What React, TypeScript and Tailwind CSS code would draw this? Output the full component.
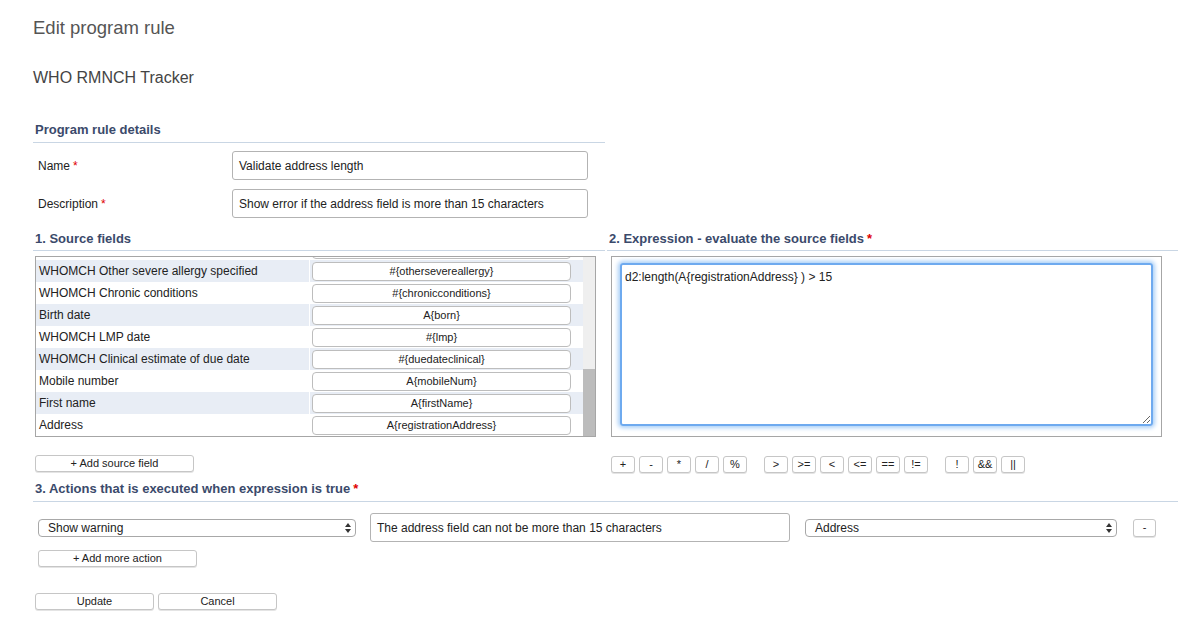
import React from "react";

type SourceRow = { label: string; value: string };

// First entry sits above the scrolled viewport; only its lower edge shows.
const sourceRows: SourceRow[] = [
  { label: "", value: "" },
  { label: "WHOMCH Other severe allergy specified", value: "#{othersevereallergy}" },
  { label: "WHOMCH Chronic conditions", value: "#{chronicconditions}" },
  { label: "Birth date", value: "A{born}" },
  { label: "WHOMCH LMP date", value: "#{lmp}" },
  { label: "WHOMCH Clinical estimate of due date", value: "#{duedateclinical}" },
  { label: "Mobile number", value: "A{mobileNum}" },
  { label: "First name", value: "A{firstName}" },
  { label: "Address", value: "A{registrationAddress}" },
];

const operatorGroups: string[][] = [
  ["+", "-", "*", "/", "%"],
  [">", ">=", "<", "<=", "==", "!="],
  ["!", "&&", "||"],
];

function Required() {
  return <span className="text-[#e00000] ml-[3px]">*</span>;
}

function SectionHeading({
  children,
  className = "",
  pb = "pb-[4px]",
}: {
  children: React.ReactNode;
  className?: string;
  pb?: string;
}) {
  return (
    <div
      className={`pl-[2px] ${pb} border-b border-[#c9d6e4] text-[13px] leading-[16px] font-bold text-[#3b4a6b] ${className}`}
    >
      {children}
    </div>
  );
}

function SmallButton({ children, className = "" }: { children: React.ReactNode; className?: string }) {
  return (
    <button
      type="button"
      className={`h-[17px] flex items-center justify-center bg-white border border-[#c6c6c6] rounded-[3px] shadow-[0_1px_0_#e4e4e4] text-[11px] leading-none text-[#222] ${className}`}
    >
      {children}
    </button>
  );
}

function SelectArrows() {
  return (
    <svg width="6" height="10" viewBox="0 0 6 10" className="shrink-0">
      <path d="M0 4 L3 0 L6 4 Z" fill="#333" />
      <path d="M0 6 L3 10 L6 6 Z" fill="#333" />
    </svg>
  );
}

function FakeSelect({ value, className = "" }: { value: string; className?: string }) {
  return (
    <div
      className={`h-[18px] flex items-center justify-between pl-[9px] pr-[4px] bg-white border border-[#a8a8a8] rounded-[4px] text-[12px] text-[#222] ${className}`}
    >
      <span>{value}</span>
      <SelectArrows />
    </div>
  );
}

export default function App() {
  return (
    <div className="w-[1190px] h-[629px] bg-white overflow-hidden font-['Liberation_Sans',Arial,sans-serif] text-[#222]">
      <div className="w-[1178px] pl-[33px] pt-[17px]">
        <h1 className="text-[18.5px] leading-[22px] text-[#555]">Edit program rule</h1>
        <h2 className="mt-[29px] text-[16px] leading-[20px] text-[#444]">WHO RMNCH Tracker</h2>

        {/* Rule details */}
        <div className="w-[572px] mt-[34px]">
          <SectionHeading>Program rule details</SectionHeading>
          <div className="mt-[8px] flex items-center h-[29px]">
            <div className="w-[199px] pl-[5px] text-[12px]">
              Name
              <Required />
            </div>
            <div className="w-[356px] h-[29px] border border-[#b3b3b3] rounded-[3px] px-[6px] flex items-center text-[12px]">
              Validate address length
            </div>
          </div>
          <div className="mt-[9px] flex items-center h-[29px]">
            <div className="w-[199px] pl-[5px] text-[12px]">
              Description
              <Required />
            </div>
            <div className="w-[356px] h-[29px] border border-[#b3b3b3] rounded-[3px] px-[6px] flex items-center text-[12px]">
              Show error if the address field is more than 15 characters
            </div>
          </div>
        </div>

        {/* Source fields + expression */}
        <div className="flex mt-[13px]">
          <div className="w-[572px]">
            <SectionHeading pb="pb-[3px]">1. Source fields</SectionHeading>
            <div className="ml-[2px] mt-[5px] w-[561px] h-[181px] border border-[#a6a6a6] flex overflow-hidden">
              <div className="flex-1 overflow-hidden">
                <div className="-mt-[19px]">
                  {sourceRows.map((row, i) => {
                    const shaded = i % 2 === 1;
                    return (
                      <div key={i} className="flex h-[22px]">
                        <div
                          className={`w-[273px] pl-[3px] flex items-center text-[12px] ${shaded ? "bg-[#e8edf5]" : ""}`}
                        >
                          {row.label}
                        </div>
                        <div className={`ml-[1px] flex-1 flex items-center pl-[2px] ${shaded ? "bg-[#e8edf5]" : ""}`}>
                          <div className="w-[259px] h-[19px] bg-white border border-[#bdbdbd] rounded-[4px] flex items-center justify-center text-[11px] text-[#222]">
                            {row.value}
                          </div>
                        </div>
                      </div>
                    );
                  })}
                </div>
              </div>
              <div className="w-[12px] bg-[#efefef] flex flex-col justify-end">
                <div className="h-[67px] bg-[#bcbcbc]" />
              </div>
            </div>
            <SmallButton className="ml-[2px] mt-[18px] w-[159px]">+ Add source field</SmallButton>
          </div>

          <div className="w-[571px] ml-[2px]">
            <SectionHeading pb="pb-[3px]">
              2. Expression - evaluate the source fields
              <Required />
            </SectionHeading>
            <div className="ml-[4px] mt-[5px] w-[551px] h-[181px] border border-[#a6a6a6] pt-[6px] pl-[8px]">
              <textarea
                readOnly
                defaultValue="d2:length(A{registrationAddress} ) > 15"
                className="block w-[533px] h-[163px] rounded-[3px] border-2 border-[#6eaaef] shadow-[0_0_4px_2px_#a9cff7] outline-none px-[3px] pt-[5px] text-[12px] leading-[15px] text-[#222] font-['Liberation_Sans',Arial,sans-serif]"
              />
            </div>
            <div className="ml-[4px] mt-[19px] flex">
              {operatorGroups.map((group, gi) => (
                <div key={gi} className={`flex gap-[4px] ${gi > 0 ? "ml-[17px]" : ""}`}>
                  {group.map((op) => (
                    <SmallButton
                      key={op}
                      className={`w-[24px] h-[16px] ${op === "||" ? "text-[#3a4fc4]" : ""}`}
                    >
                      {op}
                    </SmallButton>
                  ))}
                </div>
              ))}
            </div>
          </div>
        </div>

        {/* Actions */}
        <SectionHeading className="mt-[8px]">
          3. Actions that is executed when expression is true
          <Required />
        </SectionHeading>
        <div className="mt-[11px] ml-[5px] flex items-center">
          <FakeSelect value="Show warning" className="w-[318px]" />
          <div className="ml-[14px] w-[420px] h-[29px] border border-[#b3b3b3] rounded-[3px] px-[6px] flex items-center text-[12px]">
            The address field can not be more than 15 characters
          </div>
          <FakeSelect value="Address" className="ml-[15px] w-[312px]" />
          <SmallButton className="ml-[16px] w-[23px] h-[18px]">-</SmallButton>
        </div>
        <SmallButton className="ml-[5px] mt-[8px] w-[159px]">+ Add more action</SmallButton>

        <div className="mt-[26px] ml-[2px] flex gap-[4px]">
          <SmallButton className="w-[119px]">Update</SmallButton>
          <SmallButton className="w-[119px]">Cancel</SmallButton>
        </div>
      </div>
    </div>
  );
}
